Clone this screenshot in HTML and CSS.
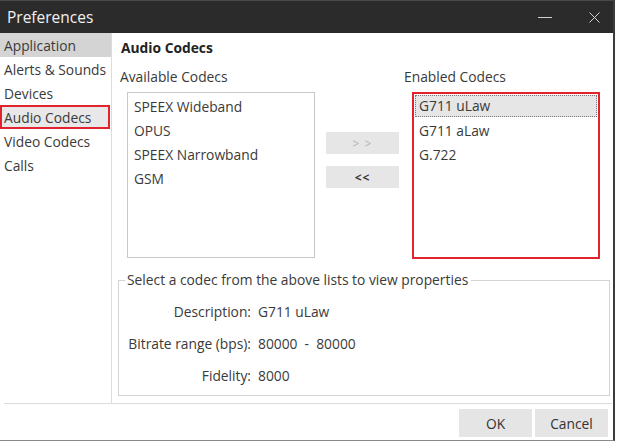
FILE: index.html
```html
<!DOCTYPE html>
<html>
<head>
	<title>Preferences</title>
	<link rel="stylesheet" href="styles.css">
</head>
<body>
	<div class="window">
		<!-- Title bar -->
		<div class="titlebar">
			<span class="title">Preferences</span>
			<span class="win-btn minimize"></span>
			<span class="win-btn close">
				<svg width="11" height="11" viewBox="0 0 11 11"><path d="M0.5 0.5L10.5 10.5M10.5 0.5L0.5 10.5" stroke="#cfcfcf" stroke-width="1" fill="none"/></svg>
			</span>
		</div>

		<div class="content">
			<!-- Left menu -->
			<ul class="sidebar">
				<li class="active">Application</li>
				<li>Alerts &amp; Sounds</li>
				<li>Devices</li>
				<li class="marked">Audio Codecs</li>
				<li>Video Codecs</li>
				<li>Calls</li>
			</ul>

			<!-- Audio codecs page -->
			<div class="page">
				<h2>Audio Codecs</h2>
				<div class="codec-row">
					<div class="codec-col">
						<div class="col-label">Available Codecs</div>
						<ul class="listbox">
							<li>SPEEX Wideband</li>
							<li>OPUS</li>
							<li>SPEEX Narrowband</li>
							<li>GSM</li>
						</ul>
					</div>
					<div class="move-btns">
						<button class="move disabled">&gt; &gt;</button>
						<button class="move">&lt;&lt;</button>
					</div>
					<div class="codec-col right">
						<div class="col-label">Enabled Codecs</div>
						<ul class="listbox marked">
							<li class="selected">G711 uLaw</li>
							<li>G711 aLaw</li>
							<li>G.722</li>
						</ul>
					</div>
				</div>

				<fieldset class="props">
					<legend>Select a codec from the above lists to view properties</legend>
					<div class="prop-grid">
						<span class="prop-label">Description:</span><span>G711 uLaw</span>
						<span class="prop-label">Bitrate range (bps):</span><span>80000&nbsp; - &nbsp;80000</span>
						<span class="prop-label">Fidelity:</span><span>8000</span>
					</div>
				</fieldset>
			</div>
		</div>

		<!-- Dialog buttons -->
		<div class="footer">
			<button class="dlg-btn">OK</button>
			<button class="dlg-btn">Cancel</button>
		</div>
	</div>
</body>
</html>
```

FILE: styles.css
```css
/* Page */
body {
	margin: 0;
	background-color: #fff;
	font-family: "Open Sans", "Noto Sans", sans-serif;
	font-size: 13.8px;
	color: #3a3a3a;
}

ul {
	list-style: none;
	margin: 0;
	padding: 0;
}

/* Dialog window */
.window {
	width: 613px;
	height: 440px;
	border-right: 2px solid #3c3c3c;
	border-bottom: 1px solid #8a8a8a;
	background-color: #fff;
	display: flex;
	flex-direction: column;
}

/* Title bar */
.titlebar {
	height: 33px;
	background-color: #2b2b2b;
	border-top: 1px solid #4a4a4a;
	box-sizing: border-box;
	display: flex;
	align-items: center;
	color: #f0f0f0;
}

.title {
	font-size: 15.5px;
	margin-left: 7px;
	flex: 1;
}

.win-btn {
	height: 32px;
	display: flex;
	align-items: center;
	justify-content: center;
}

.minimize {
	width: 46px;
	margin-right: 7px;
}

.minimize::before {
	content: "";
	width: 14px;
	height: 1px;
	background-color: #d0d0d0;
}

.close {
	width: 38px;
}

/* Content area */
.content {
	display: flex;
	height: 370px;
	border-bottom: 1px solid #dcdcdc;
	margin-right: 1px;
	margin-left: 4px;
}

/* Sidebar menu */
.sidebar {
	width: 111px;
	margin-left: -4px;
	border-right: 1px solid #dcdcdc;
}

.sidebar li {
	height: 24px;
	line-height: 25px;
	padding-left: 4px;
	box-sizing: border-box;
}

.sidebar li.active {
	background-color: #d4d4d4;
}

.sidebar li.marked {
	background-color: #e8e8e8;
	border: 2px solid #e0232d;
	line-height: 21px;
	padding-left: 2px;
	margin-right: 1px;
}

/* Page */
.page {
	flex: 1;
	padding: 6px 0 0 8px;
}

.page h2 {
	font-size: 13.8px;
	font-weight: bold;
	margin: 0 0 0 1px;
	height: 30px;
	line-height: 17px;
	color: #222;
}

.codec-row {
	display: flex;
	height: 202px;
}

.codec-col {
	width: 195px;
}

.codec-col.right {
	width: 196px;
	margin-left: 5px;
}

.col-label {
	height: 23px;
	line-height: 16px;
}

.listbox {
	margin-left: 7px;
	width: 188px;
	height: 166px;
	border: 1px solid #c8c8c8;
	box-sizing: border-box;
	padding: 2px 2px;
}

.listbox li {
	height: 24px;
	line-height: 24px;
	padding-left: 4px;
}

.listbox.marked {
	margin-left: 8px;
	height: 167px;
	border: 2px solid #e0232d;
	padding: 1px 1px;
}

.listbox li.selected {
	background-color: #e6e6e6;
	border: 1px dotted #777;
	height: 20px;
	line-height: 20px;
	padding-left: 3px;
	margin-bottom: 2px;
}

/* Move buttons */
.move-btns {
	display: flex;
	flex-direction: column;
	gap: 12px;
	padding-top: 63px;
	margin-left: 11px;
}

.move {
	width: 73px;
	height: 22px;
	border: none;
	background-color: #e6e6e6;
	font-family: inherit;
	font-size: 12px;
	font-weight: bold;
	color: #333;
	padding: 0;
	letter-spacing: 1px;
}

.move.disabled {
	color: #b4b4b4;
	font-weight: normal;
}

/* Properties group box */
.props {
	margin: 0 0 0 -2px;
	width: 492px;
	height: 125px;
	box-sizing: border-box;
	border: 1px solid #d4d4d4;
	padding: 0;
}

.props legend {
	margin-left: 6px;
	padding: 0 3px 0 2px;
	line-height: 18px;
}

.prop-grid {
	display: grid;
	grid-template-columns: 132px auto;
	column-gap: 7px;
	row-gap: 14px;
	padding-top: 14px;
	line-height: 18px;
}

.prop-label {
	text-align: right;
}

/* Footer */
.footer {
	display: flex;
	justify-content: flex-end;
	gap: 3px;
	padding: 5px 5px 0 0;
}

.dlg-btn {
	width: 73px;
	height: 28px;
	border: none;
	background-color: #e5e5e5;
	font-family: inherit;
	font-size: 13.8px;
	color: #333;
	padding: 0;
}
```
